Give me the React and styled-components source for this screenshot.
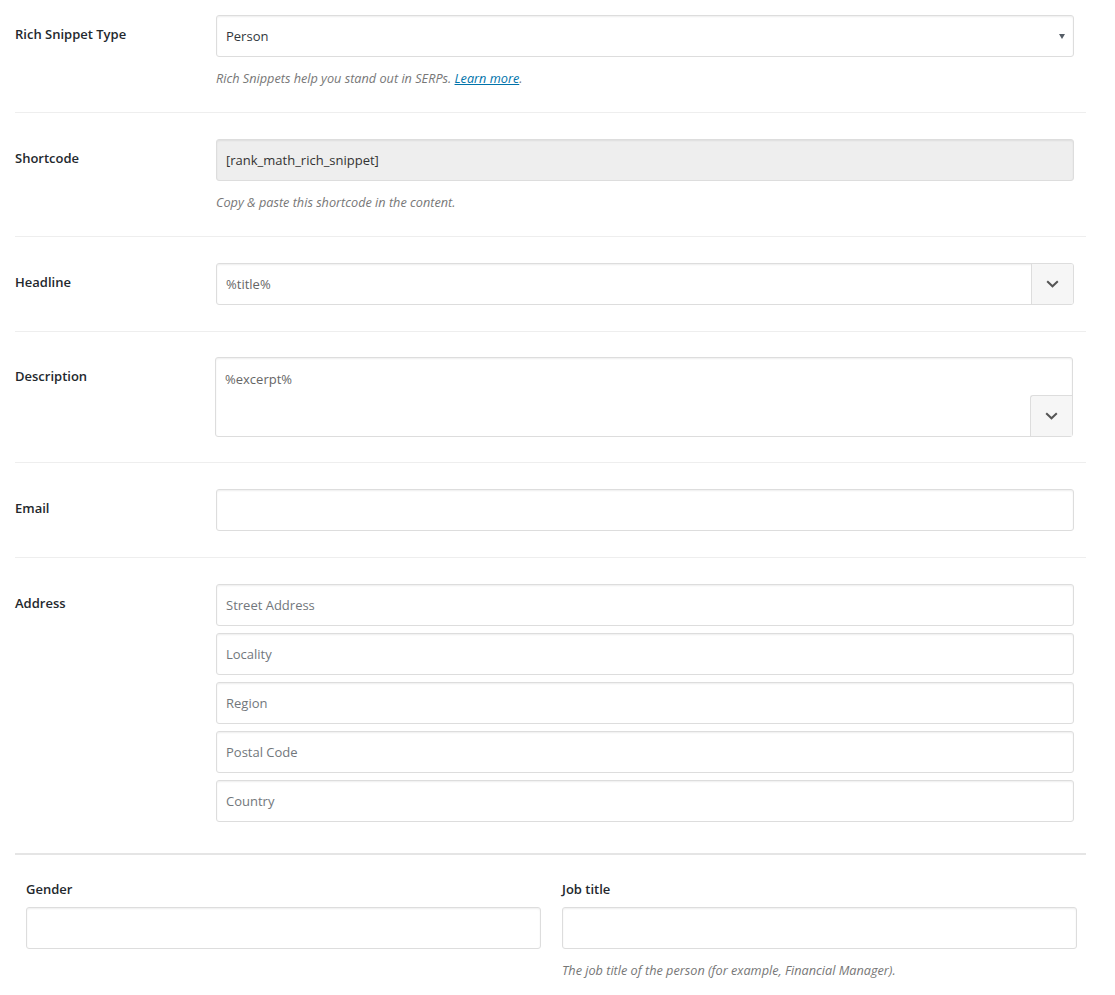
import React from "react";
import styled, { createGlobalStyle } from "styled-components";

const Global = createGlobalStyle`
  html, body { margin: 0; padding: 0; background: #fff; }
  body { font-family: "Open Sans", "Noto Sans", sans-serif; color: #23282d; }
  * { box-sizing: border-box; }
`;

const Page = styled.div`
  width: 1086px;
  padding-left: 15px;
`;

const Row = styled.div`
  display: grid;
  grid-template-columns: 201px 1fr;
  padding: ${(p) => p.$top || 26}px 12px ${(p) => p.$bottom || 26}px 0;
  border-bottom: ${(p) => (p.$thick ? "2px solid #e5e5e5" : "1px solid #eeeeee")};
`;

const Label = styled.div`
  font-size: 13px;
  font-weight: 600;
  line-height: 20px;
  padding-top: ${(p) => (p.$flush ? 0 : 9)}px;
  color: #23282d;
`;

const Field = styled.div`
  display: flex;
  flex-direction: column;
  min-width: 0;
`;

const Input = styled.input`
  display: block;
  width: 100%;
  height: 42px;
  padding: 0 9px;
  border: 1px solid #dddddd;
  border-radius: 3px;
  box-shadow: inset 0 1px 2px rgba(0, 0, 0, 0.07);
  background: ${(p) => (p.$disabled ? "#eeeeee" : "#ffffff")};
  font-family: "Open Sans", "Noto Sans", sans-serif;
  font-size: 13px;
  color: ${(p) => p.$color || "#32373c"};
  outline: none;
  margin-bottom: ${(p) => p.$mb || 0}px;
  &::placeholder { color: #72777c; opacity: 1; }
`;

const SelectBox = styled.div`
  position: relative;
  height: 42px;
  border: 1px solid #dddddd;
  border-radius: 3px;
  box-shadow: inset 0 1px 2px rgba(0, 0, 0, 0.07);
  background: #fff;
  display: flex;
  align-items: center;
  padding: 0 9px;
  font-size: 13px;
  color: #32373c;
`;

const Caret = styled.span`
  position: absolute;
  right: 8px;
  top: 18px;
  width: 0;
  height: 0;
  border-left: 3px solid transparent;
  border-right: 3px solid transparent;
  border-top: 5px solid #555d66;
`;

const Help = styled.p`
  margin: 12px 0 0;
  font-size: 12.7px;
  line-height: 18px;
  font-style: italic;
  color: #777777;
  a { color: #0073aa; text-decoration: underline; }
`;

const Combo = styled.div`
  display: flex;
  height: 42px;
  border: 1px solid #dddddd;
  border-radius: 3px;
  box-shadow: inset 0 1px 2px rgba(0, 0, 0, 0.07);
  overflow: hidden;
`;

const ComboInput = styled.input`
  flex: 1;
  min-width: 0;
  border: none;
  background: transparent;
  padding: 0 9px;
  font-family: "Open Sans", "Noto Sans", sans-serif;
  font-size: 13px;
  color: #666;
  outline: none;
`;

const DropButton = styled.button`
  width: 42px;
  flex: none;
  border: none;
  border-left: 1px solid #dddddd;
  background: #f6f6f6;
  display: flex;
  align-items: center;
  justify-content: center;
  padding: 0;
  cursor: pointer;
`;

const AreaWrap = styled.div`
  position: relative;
  height: 80px;
  margin-left: -1px;
  margin-right: 1px;
  border: 1px solid #dddddd;
  border-radius: 3px;
  box-shadow: inset 0 1px 2px rgba(0, 0, 0, 0.07);
`;

const TextArea = styled.textarea`
  width: 100%;
  height: 100%;
  border: none;
  resize: none;
  background: transparent;
  padding: 12px 9px;
  font-family: "Open Sans", "Noto Sans", sans-serif;
  font-size: 13px;
  line-height: 18px;
  color: #666;
  outline: none;
`;

const AreaButton = styled(DropButton)`
  position: absolute;
  right: 0;
  bottom: 0;
  height: 41px;
  border-top: 1px solid #dddddd;
  border-top-left-radius: 3px;
`;

const Split = styled.div`
  display: grid;
  grid-template-columns: 1fr 1fr;
  column-gap: 21px;
  padding: 24px 9px 20px 11px;
`;

const LabelSmall = styled(Label)`
  margin-bottom: 8px;
`;

const Chevron = () => (
  <svg width="13" height="8" viewBox="0 0 13 8" fill="none">
    <path d="M1.2 1.2 L6.5 6.3 L11.8 1.2" stroke="#555" strokeWidth="2" />
  </svg>
);

export default function App() {
  return (
    <>
      <Global />
      <Page>
        <Row $top={15} $bottom={25}>
          <Label>Rich Snippet Type</Label>
          <Field>
            <SelectBox>
              Person
              <Caret />
            </SelectBox>
            <Help>
              Rich Snippets help you stand out in SERPs. <a href="#">Learn more</a>.
            </Help>
          </Field>
        </Row>
        <Row $bottom={25}>
          <Label>Shortcode</Label>
          <Field>
            <Input $disabled readOnly value="[rank_math_rich_snippet]" $color="#333" />
            <Help>Copy &amp; paste this shortcode in the content.</Help>
          </Field>
        </Row>
        <Row>
          <Label>Headline</Label>
          <Combo>
            <ComboInput readOnly value="%title%" />
            <DropButton>
              <Chevron />
            </DropButton>
          </Combo>
        </Row>
        <Row $top={25} $bottom={25}>
          <Label>Description</Label>
          <AreaWrap>
            <TextArea readOnly value="%excerpt%" />
            <AreaButton>
              <Chevron />
            </AreaButton>
          </AreaWrap>
        </Row>
        <Row>
          <Label>Email</Label>
          <Input readOnly />
        </Row>
        <Row $thick $bottom={31}>
          <Label>Address</Label>
          <Field>
            <Input $mb={7} placeholder="Street Address" />
            <Input $mb={7} placeholder="Locality" />
            <Input $mb={7} placeholder="Region" />
            <Input $mb={7} placeholder="Postal Code" />
            <Input placeholder="Country" />
          </Field>
        </Row>
        <Split>
          <Field>
            <LabelSmall $flush>Gender</LabelSmall>
            <Input />
          </Field>
          <Field>
            <LabelSmall $flush>Job title</LabelSmall>
            <Input />
            <Help>The job title of the person (for example, Financial Manager).</Help>
          </Field>
        </Split>
      </Page>
    </>
  );
}
